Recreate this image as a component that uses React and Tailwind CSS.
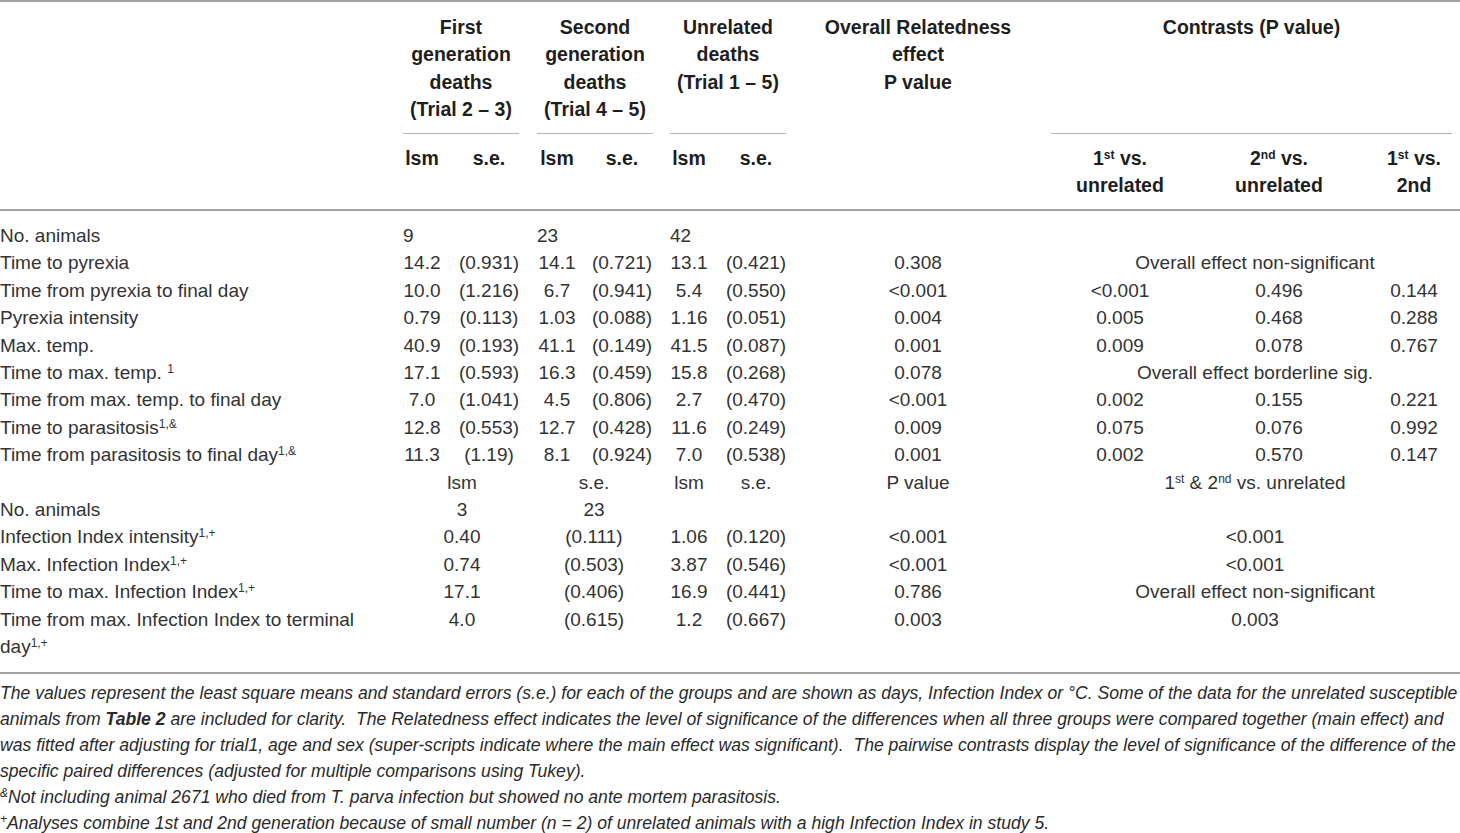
import React from 'react';

const COLS =
  'grid grid-cols-[395px_54px_80px_56px_74px_60px_74px_250px_154px_164px_106px]';

const Sup = ({ children }) => <sup className="text-[12px]">{children}</sup>;

const rows1 = [
  { label: 'No. animals', n: ['9', '23', '42'] },
  { label: 'Time to pyrexia', v: ['14.2', '(0.931)', '14.1', '(0.721)', '13.1', '(0.421)'], p: '0.308', span: 'Overall effect non-significant' },
  { label: 'Time from pyrexia to final day', v: ['10.0', '(1.216)', '6.7', '(0.941)', '5.4', '(0.550)'], p: '<0.001', c: ['<0.001', '0.496', '0.144'] },
  { label: 'Pyrexia intensity', v: ['0.79', '(0.113)', '1.03', '(0.088)', '1.16', '(0.051)'], p: '0.004', c: ['0.005', '0.468', '0.288'] },
  { label: 'Max. temp.', v: ['40.9', '(0.193)', '41.1', '(0.149)', '41.5', '(0.087)'], p: '0.001', c: ['0.009', '0.078', '0.767'] },
  { label: <>Time to max. temp. <Sup>1</Sup></>, v: ['17.1', '(0.593)', '16.3', '(0.459)', '15.8', '(0.268)'], p: '0.078', span: 'Overall effect borderline sig.' },
  { label: 'Time from max. temp. to final day', v: ['7.0', '(1.041)', '4.5', '(0.806)', '2.7', '(0.470)'], p: '<0.001', c: ['0.002', '0.155', '0.221'] },
  { label: <>Time to parasitosis<Sup>1,&amp;</Sup></>, v: ['12.8', '(0.553)', '12.7', '(0.428)', '11.6', '(0.249)'], p: '0.009', c: ['0.075', '0.076', '0.992'] },
  { label: <>Time from parasitosis to final day<Sup>1,&amp;</Sup></>, v: ['11.3', '(1.19)', '8.1', '(0.924)', '7.0', '(0.538)'], p: '0.001', c: ['0.002', '0.570', '0.147'] },
];

const rows2 = [
  { label: 'No. animals', a: '3', b: '23', v: ['', ''], p: '', span: '' },
  { label: <>Infection Index intensity<Sup>1,+</Sup></>, a: '0.40', b: '(0.111)', v: ['1.06', '(0.120)'], p: '<0.001', span: '<0.001' },
  { label: <>Max. Infection Index<Sup>1,+</Sup></>, a: '0.74', b: '(0.503)', v: ['3.87', '(0.546)'], p: '<0.001', span: '<0.001' },
  { label: <>Time to max. Infection Index<Sup>1,+</Sup></>, a: '17.1', b: '(0.406)', v: ['16.9', '(0.441)'], p: '0.786', span: 'Overall effect non-significant' },
  { label: <>Time from max. Infection Index to terminal<br />day<Sup>1,+</Sup></>, a: '4.0', b: '(0.615)', v: ['1.2', '(0.667)'], p: '0.003', span: '0.003' },
];

function Row1({ r }) {
  if (r.n) {
    return (
      <>
        <div>{r.label}</div>
        <div className="col-span-2 pl-2">{r.n[0]}</div>
        <div className="col-span-2 pl-2">{r.n[1]}</div>
        <div className="col-span-2 pl-[11px]">{r.n[2]}</div>
        <div className="col-span-4" />
      </>
    );
  }
  return (
    <>
      <div>{r.label}</div>
      {r.v.map((x, i) => (
        <div key={i} className="text-center">{x}</div>
      ))}
      <div className="text-center">{r.p}</div>
      {r.span ? (
        <div className="col-span-3 text-center">{r.span}</div>
      ) : (
        r.c.map((x, i) => (
          <div key={i} className="text-center">{x}</div>
        ))
      )}
    </>
  );
}

function Row2({ r }) {
  return (
    <>
      <div>{r.label}</div>
      <div className="col-span-2 text-center">{r.a}</div>
      <div className="col-span-2 text-center">{r.b}</div>
      <div className="text-center">{r.v[0]}</div>
      <div className="text-center">{r.v[1]}</div>
      <div className="text-center">{r.p}</div>
      <div className="col-span-3 text-center">{r.span}</div>
    </>
  );
}

export default function App() {
  return (
    <div className="w-[1460px] overflow-hidden bg-white text-[#333333] font-['Liberation_Sans',Arial,sans-serif]">
      {/* header */}
      <div className={`${COLS} w-[1467px] border-t-2 border-b-2 border-[#a3a3a3] font-bold text-[19.5px] leading-[27.3px] text-[#1e1e1e]`}>
        <div className="row-span-2" />
        <div className="col-span-2 pl-2 pr-[10px] pt-[12px]">
          <div className="h-[120px] border-b border-[#b4b4b4] text-center">
            First<br />generation<br />deaths<br />(Trial 2 – 3)
          </div>
        </div>
        <div className="col-span-2 pl-2 pr-[6px] pt-[12px]">
          <div className="h-[120px] border-b border-[#b4b4b4] text-center">
            Second<br />generation<br />deaths<br />(Trial 4 – 5)
          </div>
        </div>
        <div className="col-span-2 pl-[11px] pr-[7px] pt-[12px]">
          <div className="h-[120px] border-b border-[#b4b4b4] text-center">
            Unrelated<br />deaths<br />(Trial 1 – 5)
          </div>
        </div>
        <div className="row-span-2 pt-[12px] text-center">
          Overall Relatedness<br />effect<br />P value
        </div>
        <div className="col-span-3 pl-2 pr-[15px] pt-[12px]">
          <div className="h-[120px] border-b border-[#b4b4b4] text-center">Contrasts (P value)</div>
        </div>

        <div className="h-[75px] pt-[11px] text-center">lsm</div>
        <div className="pt-[11px] text-center">s.e.</div>
        <div className="pt-[11px] text-center">lsm</div>
        <div className="pt-[11px] text-center">s.e.</div>
        <div className="pt-[11px] text-center">lsm</div>
        <div className="pt-[11px] text-center">s.e.</div>
        <div className="pt-[11px] text-center">1<Sup>st</Sup> vs.<br />unrelated</div>
        <div className="pt-[11px] text-center">2<Sup>nd</Sup> vs.<br />unrelated</div>
        <div className="pt-[11px] text-center">1<Sup>st</Sup> vs.<br />2nd</div>
      </div>

      {/* body */}
      <div className={`${COLS} w-[1467px] border-b-2 border-[#a3a3a3] pt-[11px] pb-[11px] text-[19px] leading-[27.4px]`}>
        {rows1.map((r, i) => (
          <Row1 key={i} r={r} />
        ))}
        <div />
        <div className="col-span-2 text-center">lsm</div>
        <div className="col-span-2 text-center">s.e.</div>
        <div className="text-center">lsm</div>
        <div className="text-center">s.e.</div>
        <div className="text-center">P value</div>
        <div className="col-span-3 text-center">
          1<Sup>st</Sup> &amp; 2<Sup>nd</Sup> vs. unrelated
        </div>
        {rows2.map((r, i) => (
          <Row2 key={i} r={r} />
        ))}
      </div>

      {/* footnotes */}
      <div className="pt-[6px] italic text-[17.6px] leading-[26px] text-[#2a2a2a] font-['Liberation_Sans_Narrow','Liberation_Sans',sans-serif] whitespace-nowrap">
        <div>
          The values represent the least square means and standard errors (s.e.) for each of the groups and are shown as days, Infection Index or °C. Some of the data for the unrelated susceptible
        </div>
        <div>
          animals from <span className="font-bold">Table 2</span> are included for clarity.&nbsp; The Relatedness effect indicates the level of significance of the differences when all three groups were compared together (main effect) and
        </div>
        <div>
          was fitted after adjusting for trial1, age and sex (super-scripts indicate where the main effect was significant).&nbsp; The pairwise contrasts display the level of significance of the difference of the
        </div>
        <div>specific paired differences (adjusted for multiple comparisons using Tukey).</div>
        <div>
          <Sup>&amp;</Sup>Not including animal 2671 who died from T. parva infection but showed no ante mortem parasitosis.
        </div>
        <div>
          <Sup>+</Sup>Analyses combine 1st and 2nd generation because of small number (n = 2) of unrelated animals with a high Infection Index in study 5.
        </div>
      </div>
    </div>
  );
}
